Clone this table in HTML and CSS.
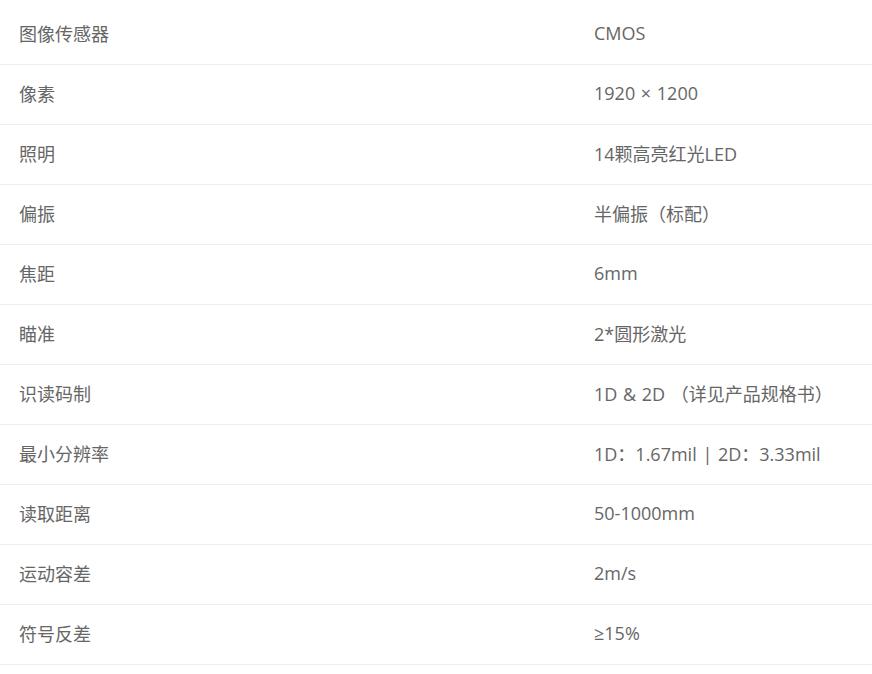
FILE: index.html
```html
<!DOCTYPE html>
<html lang="zh-CN">
<head>
<meta charset="utf-8">
<link rel="stylesheet" href="styles.css">
</head>
<body>
<div class="specs">
  <div class="row"><div class="k">图像传感器</div><div class="v">CMOS</div></div>
  <div class="row"><div class="k">像素</div><div class="v">1920 × 1200</div></div>
  <div class="row"><div class="k">照明</div><div class="v">14颗高亮红光LED</div></div>
  <div class="row"><div class="k">偏振</div><div class="v">半偏振（标配）</div></div>
  <div class="row"><div class="k">焦距</div><div class="v">6mm</div></div>
  <div class="row"><div class="k">瞄准</div><div class="v">2*圆形激光</div></div>
  <div class="row"><div class="k">识读码制</div><div class="v">1D &amp; 2D （详见产品规格书）</div></div>
  <div class="row"><div class="k">最小分辨率</div><div class="v">1D：1.67mil | 2D：3.33mil</div></div>
  <div class="row"><div class="k">读取距离</div><div class="v">50-1000mm</div></div>
  <div class="row"><div class="k">运动容差</div><div class="v">2m/s</div></div>
  <div class="row"><div class="k">符号反差</div><div class="v">≥15%</div></div>
</div>
</body>
</html>
```
FILE: styles.css
```css
html, body {
  margin: 0;
  padding: 0;
  background: #fff;
}
body {
  font-family: "Open Sans", "Noto Sans CJK SC", sans-serif;
  font-size: 18px;
  color: #666;
}
.specs {
  padding-top: 5px;
  width: 872px;
}
.row {
  box-sizing: border-box;
  display: grid;
  grid-template-columns: 575px 1fr;
  height: 60px;
  padding-bottom: 3px;
  align-items: center;
  border-bottom: 1px solid #eee;
}
.k, .v {
  padding-left: 19px;
  white-space: nowrap;
}
.v {
  word-spacing: 1px;
}
```
